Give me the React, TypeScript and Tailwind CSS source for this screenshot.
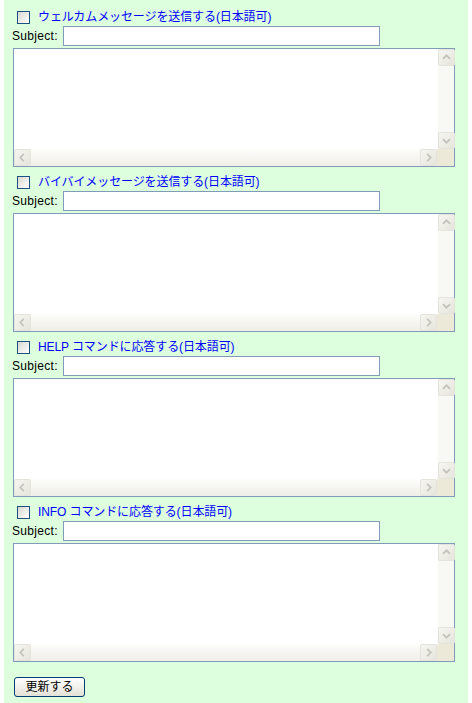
import React from "react"

const sections = [
	"ウェルカムメッセージを送信する(日本語可)",
	"バイバイメッセージを送信する(日本語可)",
	"HELP コマンドに応答する(日本語可)",
	"INFO コマンドに応答する(日本語可)",
]

const font = "font-['MS_UI_Gothic','Liberation_Sans','Noto_Sans_CJK_JP',sans-serif]"

function Arrow({ dir }: { dir: "up" | "down" | "left" | "right" }) {
	const d = {
		up: "M4.5 10 L8.5 6 L12.5 10",
		down: "M4.5 7 L8.5 11 L12.5 7",
		left: "M10 4.5 L6 8.5 L10 12.5",
		right: "M7 4.5 L11 8.5 L7 12.5",
	}[dir]
	return (
		<div className="w-[17px] h-[17px] rounded-[2px] border border-[#e4e3dc] bg-gradient-to-br from-[#f6f6f2] to-[#e6e5dc]">
			<svg width="15" height="15" viewBox="0 0 17 17">
				<path d={d} fill="none" stroke="#c4c3bb" strokeWidth="2" />
			</svg>
		</div>
	)
}

function Checkbox() {
	return (
		<span className="w-[13px] h-[13px] border border-[#1c5180] bg-gradient-to-br from-[#d8d8d2] to-white shrink-0" />
	)
}

function FakeTextarea() {
	return (
		<div className="ml-px w-[442px] h-[119px] border border-[#7f9db9] bg-white grid grid-cols-[1fr_17px] grid-rows-[1fr_17px]">
			<textarea className="resize-none outline-none bg-white overflow-hidden" />
			<div className="flex flex-col justify-between bg-[#f8f8f4] border-l border-[#fdfdfb]">
				<Arrow dir="up" />
				<Arrow dir="down" />
			</div>
			<div className="flex justify-between bg-gradient-to-b from-[#fdfdfb] to-[#efeee7]">
				<Arrow dir="left" />
				<Arrow dir="right" />
			</div>
			<div className="bg-[#ece9d8]" />
		</div>
	)
}

function Section({ label }: { label: string }) {
	return (
		<div className="mb-[6px]">
			<label className="h-[18px] flex items-center pl-[5px] gap-[8px]">
				<Checkbox />
				<span className="text-[12px] text-[#0000ff] leading-none tracking-[-0.1px]">{label}</span>
			</label>
			<div className="h-[20px] flex items-center gap-[4px]">
				<span className="w-[47px] text-[12px] text-black tracking-[0.3px]">Subject:</span>
				<input
					type="text"
					className="w-[317px] h-[20px] border border-[#7f9db9] bg-white outline-none px-1 text-[12px]"
				/>
			</div>
			<div className="mt-[2px]">
				<FakeTextarea />
			</div>
		</div>
	)
}

export default function App() {
	return (
		<div className={`mx-[4px] bg-[#ddffdd] min-h-[703px] pt-[8px] pl-[8px] pb-[10px] ${font}`}>
			{sections.map((s) => (
				<Section key={s} label={s} />
			))}
			<div className="pt-[6px] pl-[2px]">
				<button className="w-[71px] h-[20px] border border-[#003c74] rounded-[3px] bg-gradient-to-b from-white to-[#e3e1d5] text-[12px] text-black leading-none">
					更新する
				</button>
			</div>
		</div>
	)
}
